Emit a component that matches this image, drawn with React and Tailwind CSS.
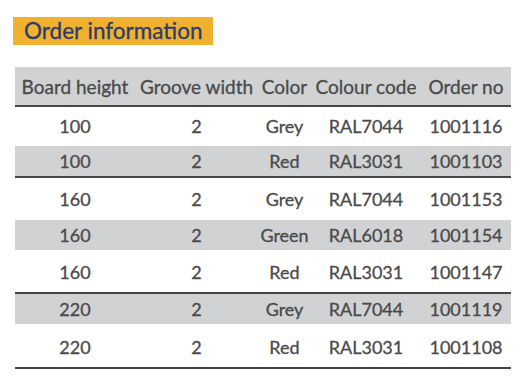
import React from 'react';

const COLUMNS = [
  { label: 'Board height', w: 'w-[120px]' },
  { label: 'Groove width', w: 'w-[123px]' },
  { label: 'Color', w: 'w-[53px]' },
  { label: 'Colour code', w: 'w-[110px]' },
  { label: 'Order no', w: 'w-[90px]' },
];

// h: full row height (border included), shaded: grey band, rule: thick line closing a group
const ROWS = [
  { cells: ['100', '2', 'Grey', 'RAL7044', '1001116'], cls: 'h-[39px]' },
  { cells: ['100', '2', 'Red', 'RAL3031', '1001103'], cls: 'h-[32px] bg-[#d1d2d4] border-b-2 border-[#454545]' },
  { cells: ['160', '2', 'Grey', 'RAL7044', '1001153'], cls: 'h-[42px]' },
  { cells: ['160', '2', 'Green', 'RAL6018', '1001154'], cls: 'h-[30px] bg-[#d1d2d4]' },
  { cells: ['160', '2', 'Red', 'RAL3031', '1001147'], cls: 'h-[44px] pt-[3px] border-b-2 border-[#454545]' },
  { cells: ['220', '2', 'Grey', 'RAL7044', '1001119'], cls: 'h-[30px] bg-[#d1d2d4]' },
  { cells: ['220', '2', 'Red', 'RAL3031', '1001108'], cls: 'h-[45px] pt-[3px] border-b-2 border-[#454545]' },
];

export default function App() {
  return (
    <div className="w-[520px] h-[385px] bg-white font-['Lato',sans-serif] text-[#4a4a4a] [-webkit-text-stroke:0.3px_#4a4a4a] overflow-hidden">
      <div className="pt-[17px] pl-[13px]">
        <div className="w-[200px] h-[28px] bg-[#f0b131] pl-[11px] flex items-center text-[22.5px] text-[#2f3b6c] [-webkit-text-stroke:0.3px_#2f3b6c] leading-none">
          Order information
        </div>
      </div>

      <div className="mt-[22px] ml-[15px] w-[496px]">
        <div className="flex h-[40px] pt-[2px] bg-[#d1d2d4] border-b-2 border-[#454545] text-[19px]">
          {COLUMNS.map(col => (
            <div key={col.label} className={`${col.w} flex items-center justify-center whitespace-nowrap`}>
              {col.label}
            </div>
          ))}
        </div>

        {ROWS.map((row, idx) => (
          <div key={idx} className={`flex text-[18px] ${row.cls}`}>
            {row.cells.map((cell, i) => (
              <div key={i} className={`${COLUMNS[i].w} flex items-center justify-center`}>
                {cell}
              </div>
            ))}
          </div>
        ))}
      </div>
    </div>
  );
}
